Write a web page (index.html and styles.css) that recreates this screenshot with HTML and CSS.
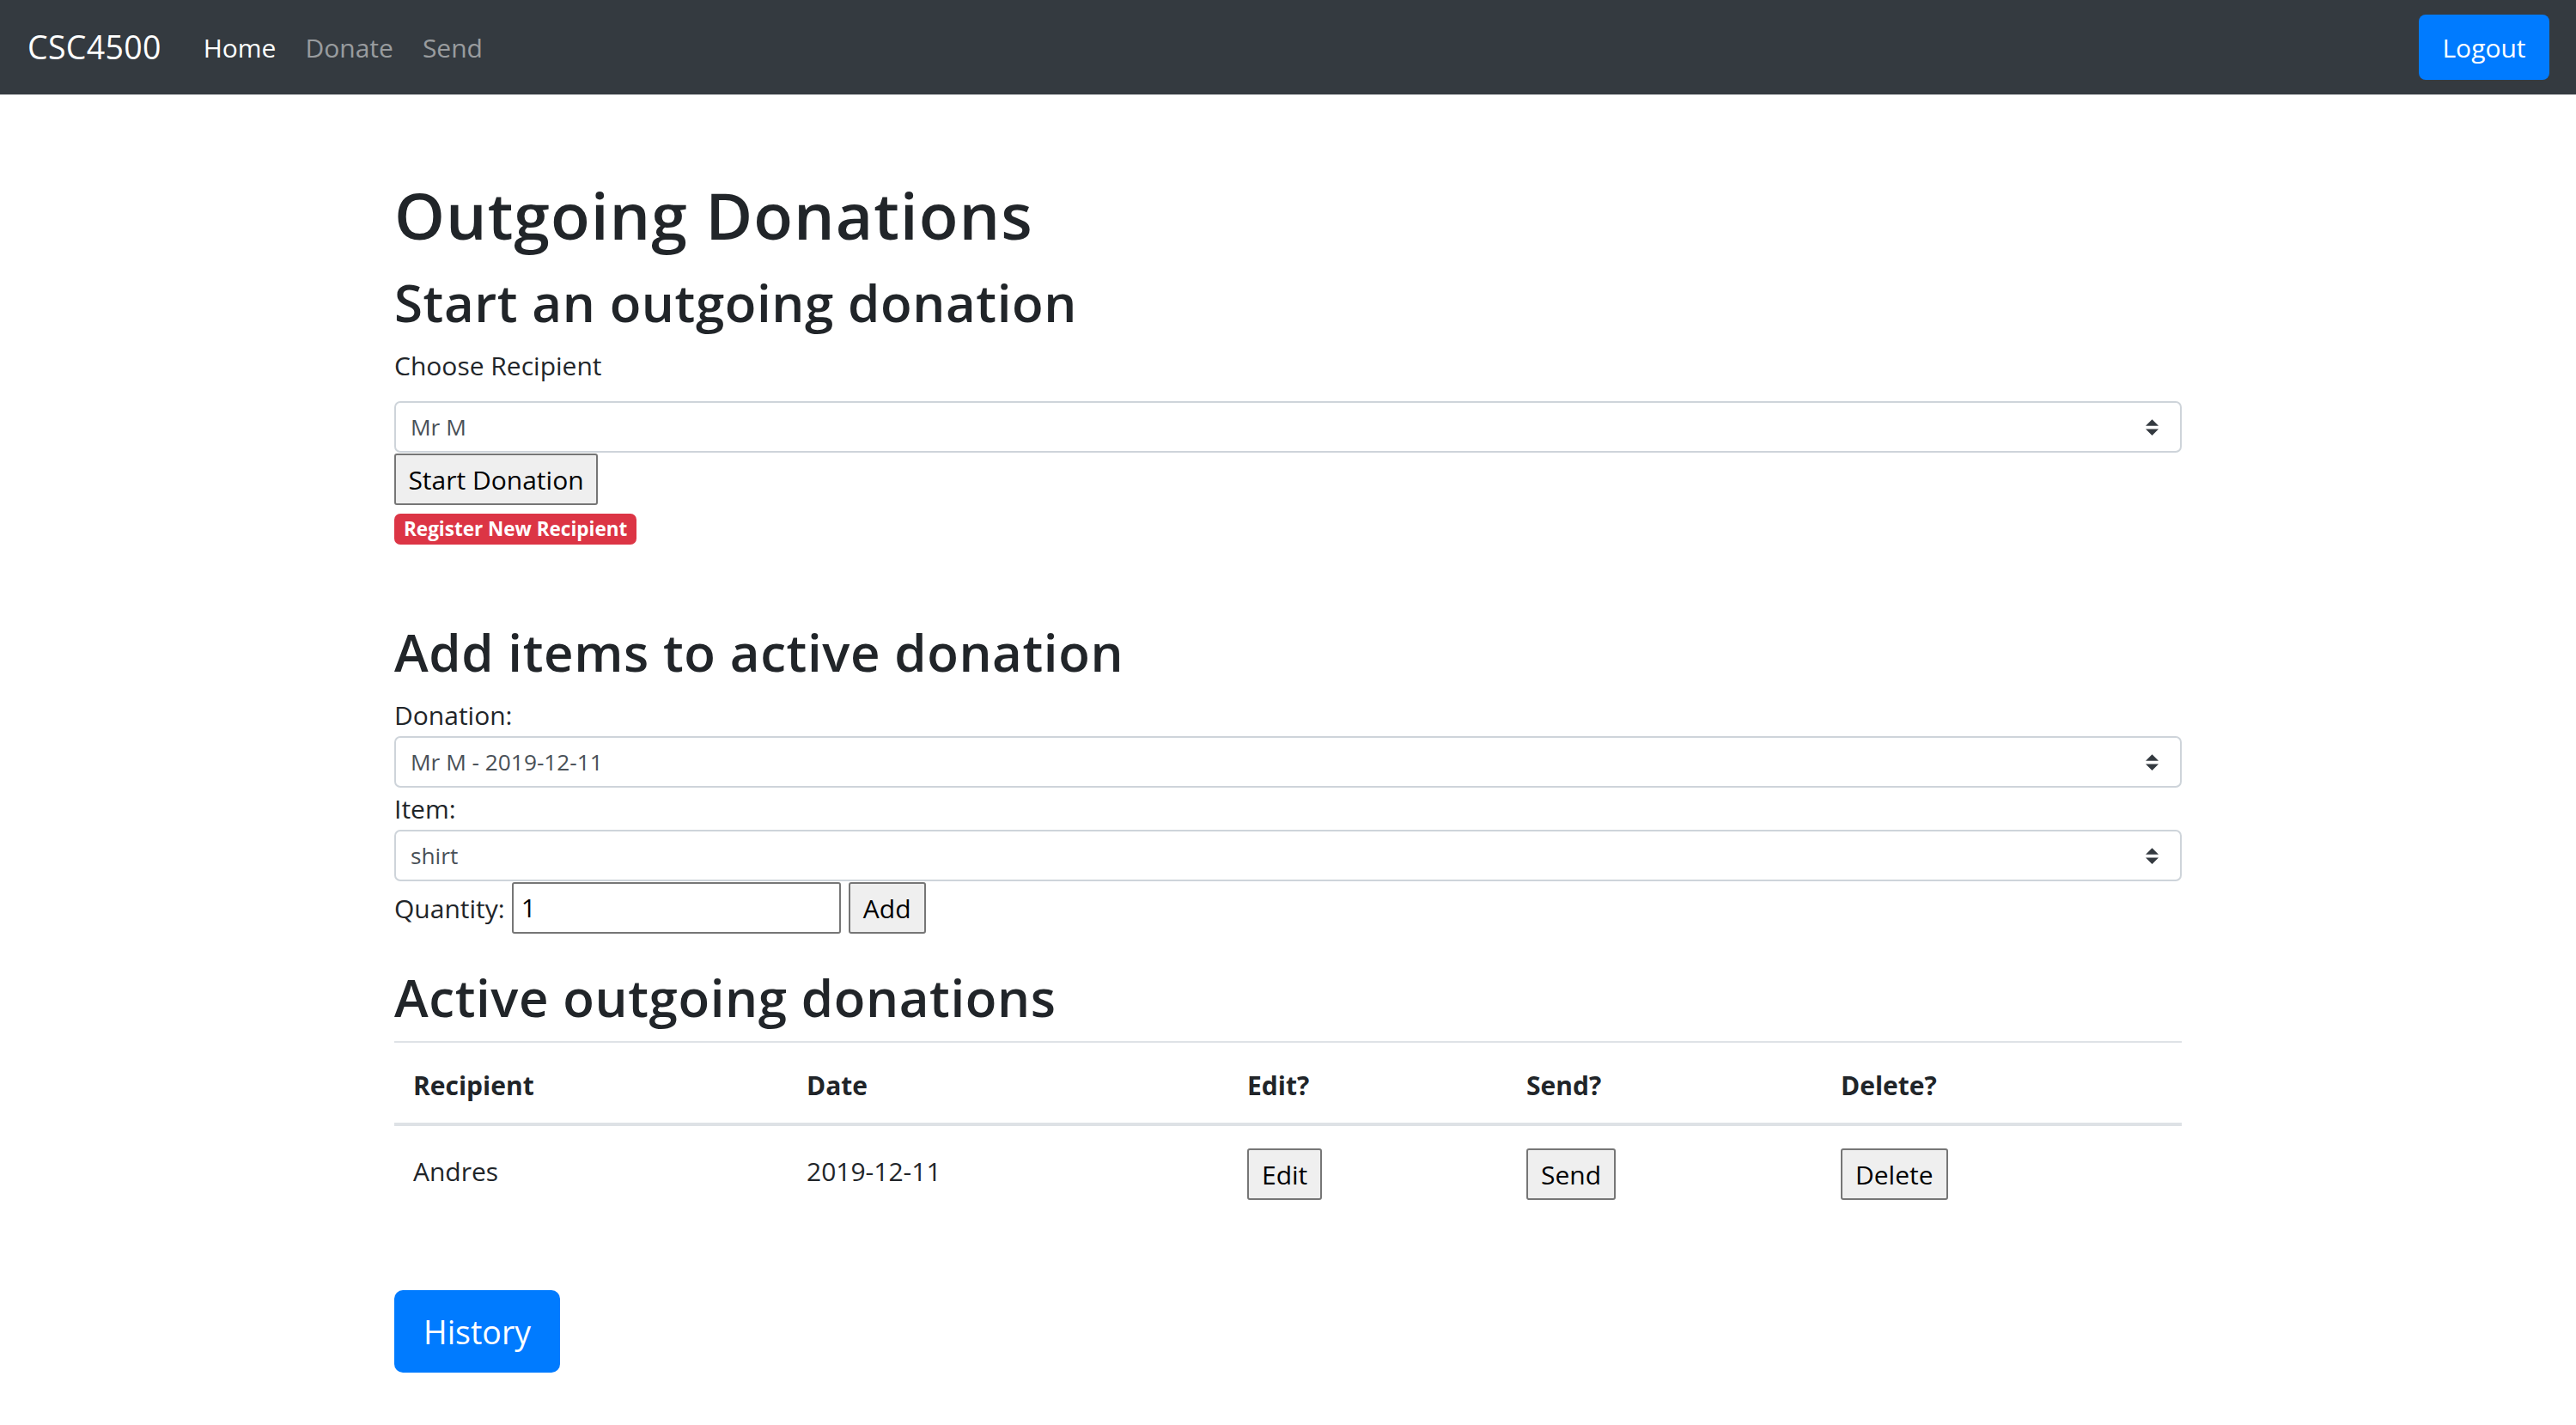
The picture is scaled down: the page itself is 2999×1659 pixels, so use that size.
FILE: index.html
```html
<!DOCTYPE html>
<html lang="en">
<head>
<meta charset="utf-8">
<title>Outgoing Donations</title>
<link rel="stylesheet" href="styles.css">
</head>
<body>
<nav class="navbar">
  <a class="brand" href="#">CSC4500</a>
  <ul class="nav-links">
    <li><a class="nav-link active" href="#">Home</a></li>
    <li><a class="nav-link" href="#">Donate</a></li>
    <li><a class="nav-link" href="#">Send</a></li>
  </ul>
  <button class="btn-primary btn-logout">Logout</button>
</nav>

<main class="container">
  <h1 class="title">Outgoing Donations</h1>

  <h2 class="section-title">Start an outgoing donation</h2>
  <label class="field-label choose-label">Choose Recipient</label>
  <div class="select">
    <span>Mr M</span>
    <svg class="select-arrow" viewBox="0 0 4 5" width="15" height="19"><path d="M2 0L0 2h4zm0 5L0 3h4z" fill="#343a40"/></svg>
  </div>
  <button class="plain-btn start-btn">Start Donation</button>
  <div><span class="badge-danger">Register New Recipient</span></div>

  <h2 class="section-title add-title">Add items to active donation</h2>
  <label class="field-label tight-label">Donation:</label>
  <div class="select">
    <span>Mr M - 2019-12-11</span>
    <svg class="select-arrow" viewBox="0 0 4 5" width="15" height="19"><path d="M2 0L0 2h4zm0 5L0 3h4z" fill="#343a40"/></svg>
  </div>
  <label class="field-label tight-label">Item:</label>
  <div class="select">
    <span>shirt</span>
    <svg class="select-arrow" viewBox="0 0 4 5" width="15" height="19"><path d="M2 0L0 2h4zm0 5L0 3h4z" fill="#343a40"/></svg>
  </div>
  <div class="quantity-row">
    <span class="qty-label">Quantity:</span>
    <div class="qty-input">1</div>
    <button class="plain-btn add-btn">Add</button>
  </div>

  <h2 class="section-title active-title">Active outgoing donations</h2>
  <table class="table">
    <thead>
      <tr>
        <th class="col-recipient">Recipient</th>
        <th class="col-date">Date</th>
        <th class="col-edit">Edit?</th>
        <th class="col-send">Send?</th>
        <th class="col-delete">Delete?</th>
      </tr>
    </thead>
    <tbody>
      <tr>
        <td>Andres</td>
        <td>2019-12-11</td>
        <td><button class="plain-btn row-btn">Edit</button></td>
        <td><button class="plain-btn row-btn">Send</button></td>
        <td><button class="plain-btn row-btn">Delete</button></td>
      </tr>
    </tbody>
  </table>

  <button class="btn-primary btn-history">History</button>
</main>
</body>
</html>
```
FILE: styles.css
```css
* { box-sizing: border-box; }

html, body {
  margin: 0;
  padding: 0;
  background: #fff;
}

body {
  font-family: "Open Sans", "Noto Sans", sans-serif;
  font-size: 30px;
  line-height: 45px;
  color: #212529;
}

/* Navbar */
.navbar {
  height: 110px;
  background: #343a40;
  display: flex;
  align-items: center;
  padding: 0 31px 0 32px;
}

.brand {
  font-size: 37.5px;
  line-height: 56px;
  color: #fff;
  text-decoration: none;
  margin-right: 32px;
  letter-spacing: 0.3px;
}

.nav-links {
  list-style: none;
  display: flex;
  margin: 0;
  padding: 0;
  flex: 1;
}

.nav-link {
  display: block;
  padding: 0 17px;
  font-size: 30px;
  color: rgba(255, 255, 255, 0.5);
  text-decoration: none;
}

.nav-link.active { color: #fff; }

.btn-primary {
  background: #007bff;
  color: #fff;
  border: none;
  font-family: inherit;
  cursor: pointer;
}

.btn-logout {
  width: 152px;
  height: 76px;
  font-size: 30px;
  border-radius: 8px;
  padding: 0;
}

/* Container */
.container {
  width: 2081px;
  margin: 0 auto;
  padding-top: 95px;
}

.title {
  font-size: 75px;
  line-height: 90px;
  font-weight: 600;
  letter-spacing: 1px;
  margin: 0 0 21px;
}

.section-title {
  font-size: 60px;
  line-height: 72px;
  font-weight: 600;
  letter-spacing: 0.6px;
  margin: 0 0 15px;
}

.field-label {
  display: block;
  line-height: 45px;
}

.choose-label { margin-bottom: 19px; }

.tight-label { margin: 2px 0 2px; }

.select {
  height: 60px;
  border: 2px solid #ced4da;
  border-radius: 7px;
  display: flex;
  align-items: center;
  justify-content: space-between;
  padding: 0 25px 0 17px;
  font-size: 26.25px;
  color: #495057;
}

.plain-btn {
  font-family: inherit;
  font-size: 30px;
  line-height: 45px;
  color: #000;
  background: #efefef;
  border: 2px solid #767676;
  border-radius: 3px;
  padding: 0 11px;
  height: 60px;
}

.start-btn {
  display: block;
  margin-top: 1px;
  width: 237px;
}

.badge-danger {
  display: inline-block;
  margin-top: 10px;
  height: 36px;
  line-height: 36px;
  padding: 0 11px;
  font-size: 22.5px;
  font-weight: 700;
  color: #fff;
  background: #dc3545;
  border-radius: 7px;
}

.add-title { margin-top: 88px; }

.quantity-row {
  display: flex;
  align-items: center;
  height: 60px;
  margin-top: 1px;
}

.qty-label { margin-right: 8px; }

.qty-input {
  width: 383px;
  height: 60px;
  border: 2px solid #767676;
  border-radius: 3px;
  padding: 0 9px;
  line-height: 56px;
  color: #000;
  margin-right: 9px;
}

.add-btn { width: 90px; padding: 0; }

.active-title { margin-top: 38px; }

/* Table */
.table {
  width: 100%;
  border-collapse: collapse;
  margin-bottom: 81px;
}

.table th,
.table td {
  text-align: left;
  vertical-align: top;
  padding: 24px 22px;
}

.table th {
  font-weight: 700;
  line-height: 45px;
  padding-top: 27px;
  padding-bottom: 21px;
  border-top: 2px solid #dee2e6;
  border-bottom: 4px solid #dee2e6;
}

.table td {
  line-height: 54px;
  padding-top: 26px;
}

.col-recipient { width: 458px; }
.col-date { width: 513px; }
.col-edit { width: 325px; }
.col-send { width: 366px; }
.col-delete { width: 419px; }

.row-btn {
  display: inline-block;
  vertical-align: top;
  padding: 0 15px;
}

.btn-history {
  display: block;
  width: 193px;
  height: 96px;
  font-size: 37.5px;
  border-radius: 10px;
  padding: 0;
}
```
